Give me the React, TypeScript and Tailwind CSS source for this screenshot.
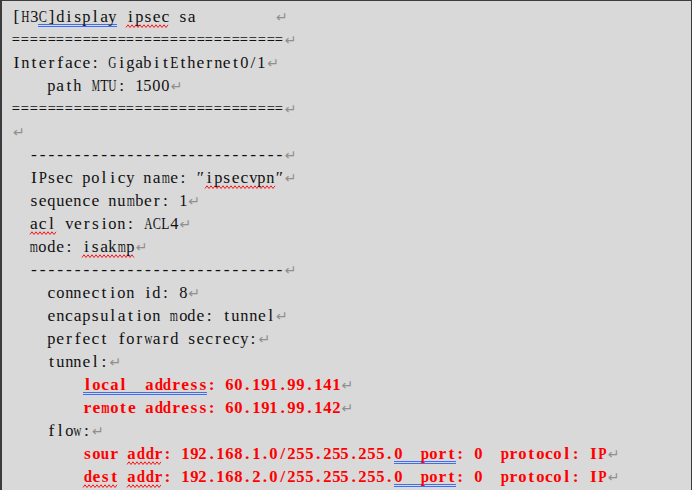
import React from "react";

type Deco = "blue" | "wavy" | undefined;
type Seg = [string, Deco?];

const FS = 17.5;
let ctx: CanvasRenderingContext2D | null = null;
const cache: Record<string, number> = {};
function measure(ch: string, bold: boolean): number {
  const key = (bold ? "b" : "n") + ch;
  if (cache[key] !== undefined) return cache[key];
  if (!ctx) ctx = document.createElement("canvas").getContext("2d");
  if (!ctx) return 8;
  ctx.font = `${bold ? "bold " : ""}${FS}px "Liberation Serif"`;
  const w = ctx.measureText(ch).width;
  cache[key] = w;
  return w;
}

function Cell({ ch, bold }: { ch: string; bold: boolean }) {
  const cell = bold ? 8.88 : 8.78;
  const w = measure(ch, bold);
  const lim = cell - 0.6;
  const sc = w > lim ? lim / w : 1;
  return (
    <span className={"inline-flex justify-center " + (bold ? "w-[8.88px]" : "w-[8.78px]")}>
      <span className="inline-block whitespace-pre" style={sc < 1 ? { transform: `scaleX(${sc.toFixed(3)})` } : undefined}>
        {ch}
      </span>
    </span>
  );
}

function Wave({ w }: { w: number }) {
  const pts: string[] = [];
  for (let p = 0, i = 0; p <= w + 0.01; p += 2, i++) pts.push(`${p},${i % 2 === 0 ? 3.5 : 0.8}`);
  return (
    <svg className="block overflow-visible" width={w} height={4} viewBox={`0 0 ${w} 4`}>
      <polyline points={pts.join(" ")} fill="none" stroke="#ff0000" strokeWidth={0.9} />
    </svg>
  );
}

function Dbl() {
  return (
    <span className="flex h-[3px] w-full flex-col justify-between">
      <span className="block h-px bg-[#3f6ef2]" />
      <span className="block h-px bg-[#3f6ef2]" />
    </span>
  );
}

function Mark() {
  return (
    <span
      className="inline-block text-[#8f8f8f] text-[14px] font-normal ml-[1px] align-baseline"
      style={{ fontFamily: '"DejaVu Sans", sans-serif' }}
    >
      ↵
    </span>
  );
}

function L({ segs, red, mark = true }: { segs: Seg[]; red?: boolean; mark?: boolean }) {
  const bold = !!red;
  const cell = bold ? 8.88 : 8.78;
  return (
    <div className={"h-[23px] leading-[23px] whitespace-pre " + (red ? "text-[#ff0000] font-bold" : "text-[#111111]")}>
      {segs.map(([t, d], i) => {
        const chars = t.split("").map((c, j) => <Cell key={j} ch={c} bold={bold} />);
        if (!d) return <span key={i}>{chars}</span>;
        return (
          <span key={i} className="inline-flex h-[23px] flex-col align-baseline">
            <span className="h-[19px] leading-[23px] whitespace-pre">{chars}</span>
            {d === "blue" ? <Dbl /> : <Wave w={t.length * cell} />}
          </span>
        );
      })}
      {mark && <Mark />}
    </div>
  );
}

export default function App() {
  return (
    <div
      className="w-[692px] h-[490px] overflow-hidden bg-[#d9d9d9] border-l-2 border-t border-r border-[#3c3c3c] pl-[10px] pt-[4px] text-[17.5px] font-['Liberation_Serif','Times_New_Roman',serif]"
    >
      <L segs={[["[H3"], ["C]display", "blue"], [" "], ["ipsec", "wavy"], [" sa         "]]} />
      <L segs={[["==============================="]]} />
      <L segs={[["Interface: GigabitEthernet0/1"]]} />
      <L segs={[["    path MTU: 1500"]]} />
      <L segs={[["==============================="]]} />
      <L segs={[]} />
      <L segs={[["  -----------------------------"]]} />
      <L segs={[["  IPsec policy name: ″"], ["ipsecvpn", "wavy"], ["″"]]} />
      <L segs={[["  sequence number: 1"]]} />
      <L segs={[["  "], ["acl", "wavy"], [" version: ACL4"]]} />
      <L segs={[["  mode: "], ["isakmp", "wavy"]]} />
      <L segs={[["  -----------------------------"]]} />
      <L segs={[["    connection id: 8"]]} />
      <L segs={[["    encapsulation mode: tunnel"]]} />
      <L segs={[["    perfect forward secrecy:"]]} />
      <L segs={[["    tunnel:"]]} />
      <L red segs={[["        "], ["local  address", "blue"], [": 60.191.99.141"]]} />
      <L red segs={[["        remote address: 60.191.99.142"]]} />
      <L segs={[["    flow:"]]} />
      <L
        red
        segs={[
          ["        sour "],
          ["addr", "wavy"],
          [": 192.168.1.0/255.255.255."],
          ["0  port", "blue"],
          [": 0  protocol: IP"],
        ]}
      />
      <L
        red
        segs={[
          ["        "],
          ["dest", "wavy"],
          [" "],
          ["addr", "wavy"],
          [": 192.168.2.0/255.255.255."],
          ["0  port", "blue"],
          [": 0  protocol: IP"],
        ]}
      />
    </div>
  );
}
